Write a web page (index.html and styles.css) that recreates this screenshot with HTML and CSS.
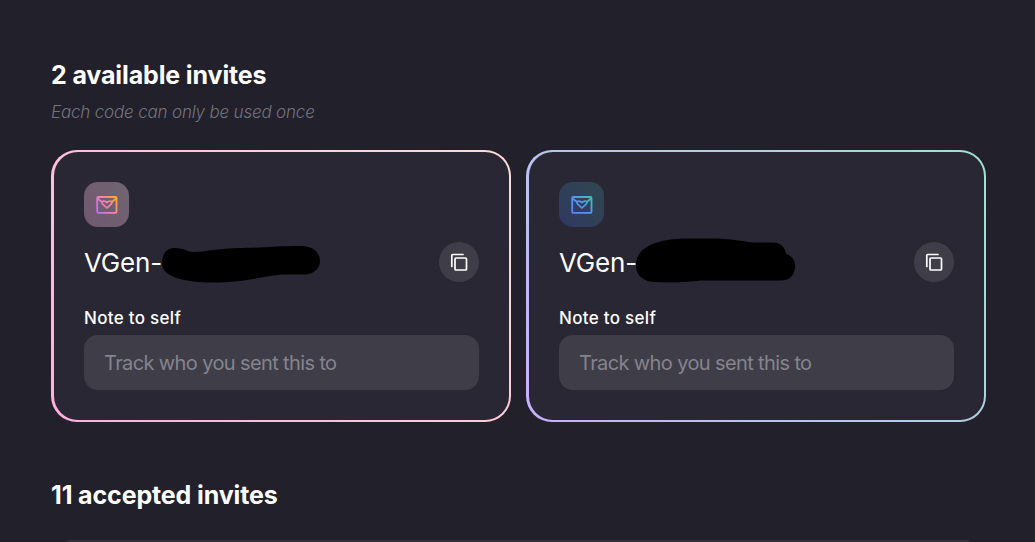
FILE: index.html
```html
<!DOCTYPE html>
<html lang="en">
	<head>
		<meta charset="utf-8">
		<title>Invites</title>
		<link rel="stylesheet" href="styles.css">
	</head>
	<body>
		<svg class="defs" width="0" height="0">
			<defs>
				<linearGradient id="sunset" gradientUnits="userSpaceOnUse" x1="0" y1="17" x2="22" y2="0">
					<stop offset="0" stop-color="#b66cff"/>
					<stop offset="0.5" stop-color="#ff7db4"/>
					<stop offset="1" stop-color="#ffb600"/>
				</linearGradient>
				<linearGradient id="ocean" gradientUnits="userSpaceOnUse" x1="0" y1="17" x2="22" y2="0">
					<stop offset="0" stop-color="#5b82ff"/>
					<stop offset="0.5" stop-color="#4f9bee"/>
					<stop offset="1" stop-color="#35c8b0"/>
				</linearGradient>
				<g id="envelope" fill="none" stroke-width="1.8" stroke-linejoin="round" stroke-linecap="round">
					<rect x="1.2" y="1" width="19.3" height="15.8" rx="1"/>
					<path d="M1.5 2.5 6 6M20 2.5 15.8 6"/>
					<path stroke-width="1.7" d="M10.9 12 6.4 7.8C4.8 5.4 8 3.7 10.9 6.6 13.8 3.7 17 5.4 15.4 7.8Z"/>
				</g>
				<g id="copy" fill="none" stroke="#fff" stroke-width="1.7" stroke-linejoin="round" stroke-linecap="round">
					<rect x="5" y="5" width="11.5" height="12" rx="1"/>
					<path d="M1.8 13.5V2.5Q1.8 1.5 2.8 1.5H13"/>
				</g>
			</defs>
		</svg>

		<main class="page">
			<h1 class="title">2 available invites</h1>
			<p class="hint">Each code can only be used once</p>

			<div class="invites">
				<section class="card pink">
					<div class="inner">
						<div class="badge"><svg width="22" height="18" stroke="url(#sunset)"><use href="#envelope"/></svg></div>
						<div class="code-row">
							<span class="code">VGen-</span>
							<svg class="scribble" width="160" height="48"><path d="M1 26C1 15 6 10 14 10 23 10 27 14 32 14 43 14 60 10 78 10 98 10 112 8 141 8 152 8 159 15 159 23 159 31 152 36 145 36.500H121C101 38 86 44.500 51 44.500 25 44.500 1 39 1 26Z"/></svg>
							<button class="copy" aria-label="Copy"><svg width="18" height="18"><use href="#copy"/></svg></button>
						</div>
						<label class="label" for="note1">Note to self</label>
						<input class="note" id="note1" type="text" placeholder="Track who you sent this to">
					</div>
				</section>
				<section class="card blue">
					<div class="inner">
						<div class="badge"><svg width="22" height="18" stroke="url(#ocean)"><use href="#envelope"/></svg></div>
						<div class="code-row">
							<span class="code">VGen-</span>
							<svg class="scribble" width="160" height="48"><path d="M0 28C-1 10 20 .5 51 .5H80C96 1 105 3 117 4.500H137C145 5 149 9 150 16 157 18 160 24 159 30 158 38 153 42.500 145 42.500H64C51 44.500 30 45 14 43.500 4 41 0 35 0 28Z"/></svg>
							<button class="copy" aria-label="Copy"><svg width="18" height="18"><use href="#copy"/></svg></button>
						</div>
						<label class="label" for="note2">Note to self</label>
						<input class="note" id="note2" type="text" placeholder="Track who you sent this to">
					</div>
				</section>
			</div>

			<h2 class="title accepted">11 accepted invites</h2>
			<div class="list"></div>
		</main>
	</body>
</html>
```

FILE: styles.css
```css
*{
	box-sizing: border-box;
}
body{
	margin: 0;
	background: #21202b;
	color: #fff;
	font-family: Inter, "Liberation Sans", sans-serif;
}
.defs{
	display: block;
}
.page{
	padding: 60px 49px 0 51px;
}
.title{
	margin: 0;
	font-size: 25px;
	font-weight: 700;
	line-height: 30px;
	letter-spacing: -0.13px;
}
.hint{
	margin: 11px 0 0;
	font-size: 17px;
	font-style: italic;
	font-weight: 300;
	line-height: 22px;
	letter-spacing: -0.18px;
	color: #74737d;
}
.invites{
	display: grid;
	grid-template-columns: 460px 460px;
	gap: 15px;
	margin-top: 27px;
}
.card{
	height: 272px;
	padding: 2px 2px 2px 3px;
	border-radius: 26px;
}
.pink{
	background: linear-gradient(45deg, #ffafe0, #ffdcd6);
}
.blue{
	background: linear-gradient(45deg, #c8b0ff, #a0e2d0);
}
.inner{
	height: 100%;
	padding: 30px;
	border-radius: 24px;
	background: #282733;
}
.badge{
	display: flex;
	align-items: center;
	justify-content: center;
	width: 45px;
	height: 45px;
	border-radius: 14px;
}
.pink .badge{
	background: linear-gradient(45deg, #705870, #716570);
}
.blue .badge{
	background: linear-gradient(45deg, #303861, #30484f);
}
.code-row{
	display: flex;
	align-items: center;
	position: relative;
	height: 40px;
	margin-top: 15px;
}
.code{
	font-size: 26px;
	font-weight: 400;
	letter-spacing: -0.2px;
}
/* marker stroke over the code */
.scribble{
	position: absolute;
	left: 77px;
	top: -4px;
}
.copy{
	display: flex;
	align-items: center;
	justify-content: center;
	width: 40px;
	height: 40px;
	margin-left: auto;
	padding: 0;
	border: none;
	border-radius: 50%;
	background: #3e3d48;
}
.label{
	display: block;
	margin-top: 25px;
	font-size: 17px;
	font-weight: 500;
	line-height: 22px;
	letter-spacing: 0.3px;
}
.note{
	display: block;
	width: 100%;
	height: 55px;
	margin-top: 6px;
	padding: 0 20px;
	border: none;
	border-radius: 14px;
	background: #3e3d48;
	color: #fff;
	font-family: inherit;
	font-size: 20px;
	letter-spacing: -0.62px;
}
.note::placeholder{
	color: #85848c;
}
.accepted{
	margin-top: 58px;
}
.list{
	height: 2px;
	margin: 30px 17px 0;
	background: #32303b;
}
```
